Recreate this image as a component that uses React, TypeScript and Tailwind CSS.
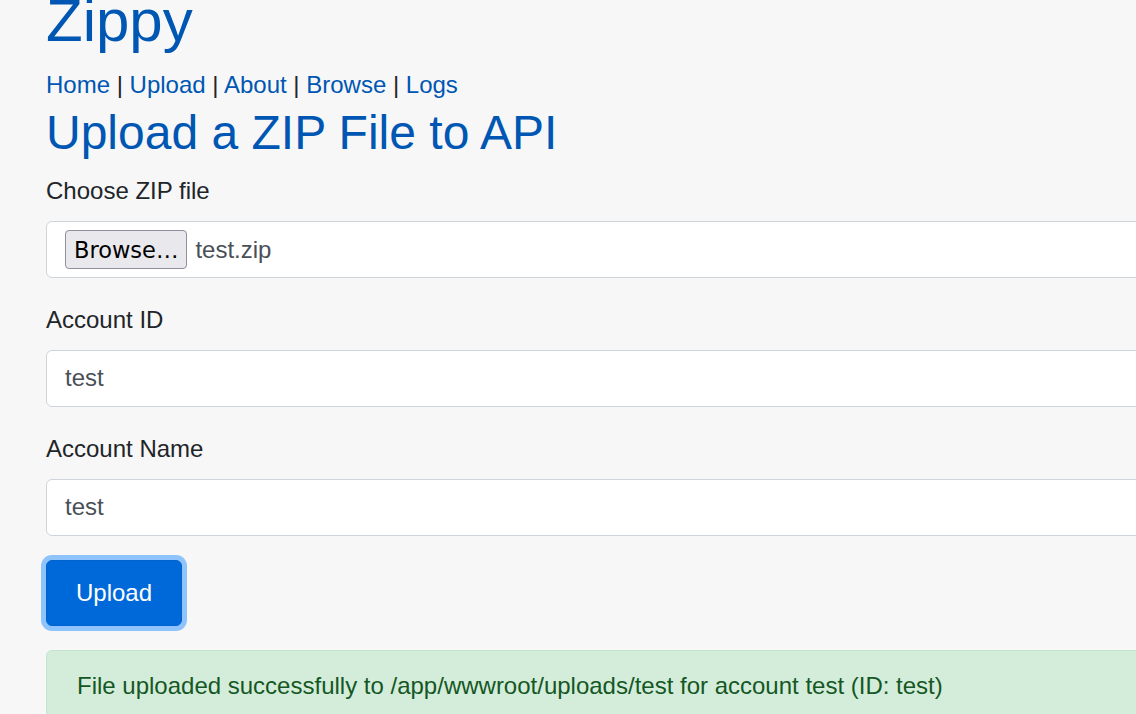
import React from "react";

export default function App() {
  const font = { fontFamily: '"Liberation Sans", Arial, sans-serif' };
  return (
    <div
      className="w-[1136px] h-[714px] overflow-hidden bg-[#f7f7f7] text-[#212529]"
      style={font}
    >
      <div className="pl-[46px]">
        <h1 className="mt-[-15px] text-[60px] leading-[1.2] text-[#0056b3]">Zippy</h1>
        <nav className="mt-[10px] text-[24px] leading-[1.5]">
          <a className="text-[#0056b3]">Home</a> | <a className="text-[#0056b3]">Upload</a> |{" "}
          <a className="text-[#0056b3]">About</a> | <a className="text-[#0056b3]">Browse</a> |{" "}
          <a className="text-[#0056b3]">Logs</a>
        </nav>
        <h2 className="mt-[1px] text-[48px] leading-[1.2] text-[#0056b3]">Upload a ZIP File to API</h2>

        <div className="mt-[11px] flex flex-col">
          <label className="text-[24px] leading-[1.5]">Choose ZIP file</label>
          <div className="mt-[12px] flex h-[57px] w-[1200px] items-center rounded-[6px] border border-[#ced4da] bg-white pl-[18px]">
            <span
              className="flex h-[39px] items-center rounded-[4px] border border-[#8f8f9d] bg-[#e9e9ed] px-[8px] pt-[3px] text-[22.5px] leading-none text-black"
              style={{ fontFamily: '"DejaVu Sans", sans-serif' }}
            >
              Browse…
            </span>
            <span className="ml-[8px] pt-[2px] text-[24px] text-[#495057]">test.zip</span>
          </div>

          <label className="mt-[24px] text-[24px] leading-[1.5]">Account ID</label>
          <div className="mt-[12px] flex h-[57px] w-[1200px] items-center rounded-[6px] border border-[#ced4da] bg-white pl-[18px] text-[24px] text-[#495057]">
            test
          </div>

          <label className="mt-[24px] text-[24px] leading-[1.5]">Account Name</label>
          <div className="mt-[12px] flex h-[57px] w-[1200px] items-center rounded-[6px] border border-[#ced4da] bg-white pl-[18px] text-[24px] text-[#495057]">
            test
          </div>

          <div className="mt-[24px] flex">
            <button className="flex h-[66px] w-[136px] items-center justify-center rounded-[6px] border border-[#0062cc] bg-[#0069d9] text-[24px] text-white shadow-[0_0_0_5px_#8ec3fb]">
              Upload
            </button>
          </div>

          <div className="mt-[24px] w-[1200px] rounded-[6px] border border-[#c3e6cb] bg-[#d4edda] px-[30px] py-[17px] text-[24px] leading-[1.5] text-[#155724]">
            File uploaded successfully to /app/wwwroot/uploads/test for account test (ID: test)
          </div>
        </div>
      </div>
    </div>
  );
}
